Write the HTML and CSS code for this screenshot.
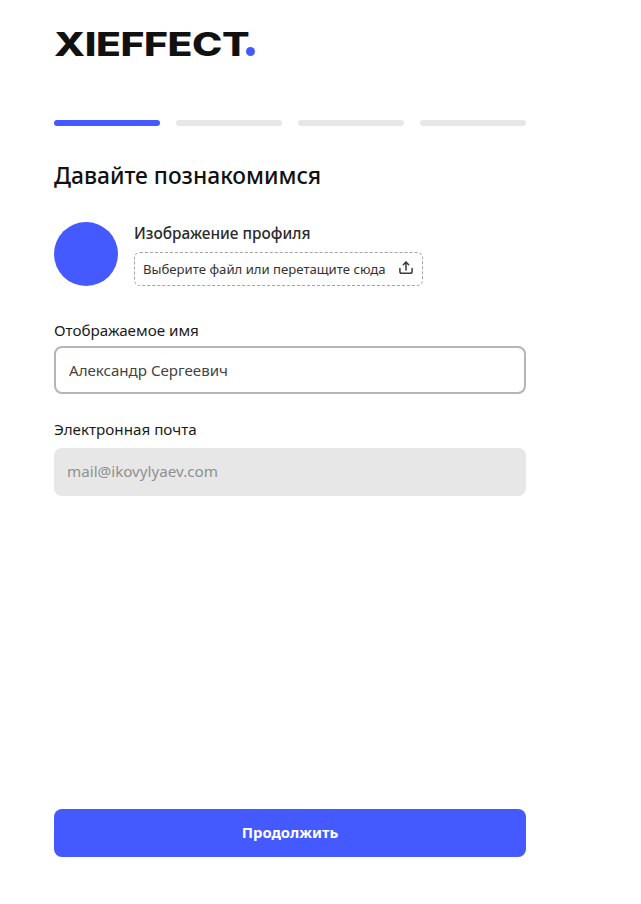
FILE: index.html
```html
<!DOCTYPE html>
<html lang="ru">
<head>
<meta charset="utf-8">
<title>Xieffect</title>
<link rel="stylesheet" href="styles.css">
</head>
<body>
<main class="page">
  <div class="logo"><span class="logo-text">XIEFFECT</span><span class="logo-dot"></span></div>
  <div class="steps">
    <span class="step active"></span><span class="step"></span><span class="step"></span><span class="step"></span>
  </div>
  <h1 class="title">Давайте познакомимся</h1>
  <section class="avatar-row">
    <div class="avatar"></div>
    <div class="avatar-info">
      <div class="avatar-label">Изображение профиля</div>
      <div class="dropzone">
        <span>Выберите файл или перетащите сюда</span>
        <svg class="upload" width="14" height="14" viewBox="0 0 14 14" fill="none" stroke="#3a3a3a" stroke-width="1.5" stroke-linecap="round" stroke-linejoin="round"><path d="M.9 7.6v2.9c0 1 .8 1.8 1.8 1.8h8.6c1 0 1.8-.8 1.8-1.8V7.6"/><path d="M7 9V1.2"/><path d="M4.3 3.8 7 1.1l2.7 2.7"/></svg>
      </div>
    </div>
  </section>
  <label class="field-label name-label">Отображаемое имя</label>
  <div class="input">Александр Сергеевич</div>
  <label class="field-label mail-label">Электронная почта</label>
  <div class="input-disabled">mail@ikovylyaev.com</div>
  <button class="submit">Продолжить</button>
</main>
</body>
</html>
```

FILE: styles.css
```css
* { box-sizing: border-box; }
html, body { margin: 0; height: 100%; background: #fff; }
body { font-family: "Noto Sans", sans-serif; color: #1a1a1a; }
.page { width: 472px; height: 904px; margin-left: 54px; display: flex; flex-direction: column; }
.logo { height: 120px; padding-top: 29px; display: flex; align-items: flex-start; }
.logo-text { width: 192px; font-family: Inter, sans-serif; font-weight: 800; font-size: 32px; line-height: 32px; color: #111; white-space: nowrap; transform: scaleX(1.275); transform-origin: left center; letter-spacing: -0.3px; }
.logo-dot { width: 9px; height: 9px; margin-top: 18px; border-radius: 50%; background: #445aff; }
.steps { display: flex; gap: 16px; height: 6px; }
.step { flex: 1; border-radius: 3px; background: #e7e7e7; }
.step.active { background: #445aff; }
.title { margin: 33px 0 0; font-size: 22.8px; line-height: 34px; font-weight: 500; color: #111; }
.avatar-row { margin-top: 29px; display: flex; gap: 16px; }
.avatar { width: 64px; height: 64px; border-radius: 50%; background: #445aff; }
.avatar-info { display: flex; flex-direction: column; }
.avatar-label { font-size: 15.4px; line-height: 24px; font-weight: 500; color: #2b2b2b; margin-bottom: 6px; }
.dropzone { width: 289px; height: 34px; border: 1px dashed #a3a3a3; border-radius: 6px; padding: 0 8px; display: flex; align-items: center; justify-content: space-between; font-size: 13.15px; color: #333; }
.upload { margin-right: 1px; margin-bottom: 2px; }
.field-label { display: block; font-size: 15.2px; line-height: 24px; color: #1a1a1a; }
.name-label { margin-top: 32px; }
.mail-label { margin-top: 23px; }
.input { margin-top: 4px; height: 48px; border: 2px solid #b5b5b5; border-radius: 8px; padding: 0 13px; display: flex; align-items: center; font-size: 15.1px; color: #444; }
.input-disabled { margin-top: 7px; height: 48px; border-radius: 8px; background: #e7e7e7; padding: 0 13px 2px; display: flex; align-items: center; font-size: 15.2px; color: #8f8f8f; }
.submit { margin-top: auto; margin-bottom: 47px; height: 48px; border: 0; border-radius: 8px; padding: 0 0 2px; background: #445aff; color: #fff; font-family: inherit; font-size: 14.8px; font-weight: 700; }
```
